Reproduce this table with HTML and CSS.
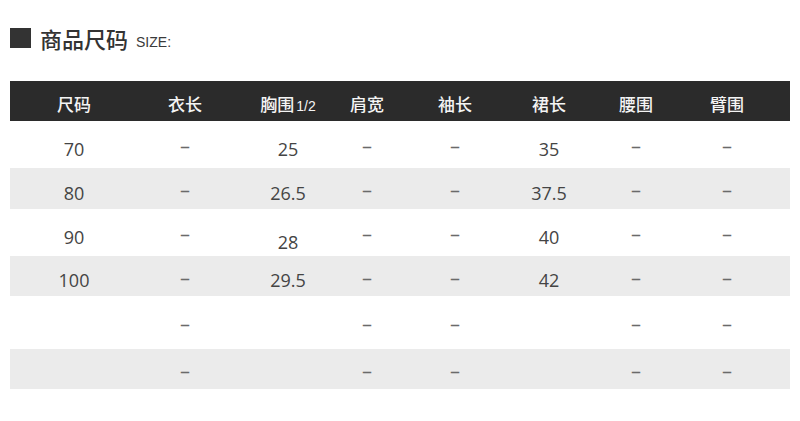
FILE: index.html
```html
<!DOCTYPE html>
<html lang="zh">
<head>
<meta charset="utf-8">
<title>商品尺码</title>
<link rel="stylesheet" href="styles.css">
</head>
<body>
<div class="page">
  <div class="title">
    <span class="sq"></span>
    <span class="cn">商品尺码</span>
    <span class="en">SIZE:</span>
  </div>
  <div class="table">
    <div class="row head">
      <div class="cell">尺码</div>
      <div class="cell">衣长</div>
      <div class="cell">胸围<small>1/2</small></div>
      <div class="cell">肩宽</div>
      <div class="cell">袖长</div>
      <div class="cell">裙长</div>
      <div class="cell">腰围</div>
      <div class="cell">臂围</div>
      <div class="cell"></div>
    </div>
    <div class="row r1">
      <div class="cell">70</div><div class="cell dash">–</div><div class="cell">25</div><div class="cell dash">–</div><div class="cell dash">–</div><div class="cell">35</div><div class="cell dash">–</div><div class="cell dash">–</div><div class="cell"></div>
    </div>
    <div class="row r2 grey">
      <div class="cell">80</div><div class="cell dash">–</div><div class="cell">26.5</div><div class="cell dash">–</div><div class="cell dash">–</div><div class="cell">37.5</div><div class="cell dash">–</div><div class="cell dash">–</div><div class="cell"></div>
    </div>
    <div class="row r3">
      <div class="cell">90</div><div class="cell dash">–</div><div class="cell low">28</div><div class="cell dash">–</div><div class="cell dash">–</div><div class="cell">40</div><div class="cell dash">–</div><div class="cell dash">–</div><div class="cell"></div>
    </div>
    <div class="row r4 grey">
      <div class="cell">100</div><div class="cell dash">–</div><div class="cell">29.5</div><div class="cell dash">–</div><div class="cell dash">–</div><div class="cell">42</div><div class="cell dash">–</div><div class="cell dash">–</div><div class="cell"></div>
    </div>
    <div class="row r5">
      <div class="cell"></div><div class="cell dash">–</div><div class="cell"></div><div class="cell dash">–</div><div class="cell dash">–</div><div class="cell"></div><div class="cell dash">–</div><div class="cell dash">–</div><div class="cell"></div>
    </div>
    <div class="row r6 grey">
      <div class="cell"></div><div class="cell dash">–</div><div class="cell"></div><div class="cell dash">–</div><div class="cell dash">–</div><div class="cell"></div><div class="cell dash">–</div><div class="cell dash">–</div><div class="cell"></div>
    </div>
  </div>
</div>
</body>
</html>
```
FILE: styles.css
```css
html, body {
  margin: 0;
  padding: 0;
  background: #ffffff;
}
.page {
  padding: 0 10px;
  font-family: "Open Sans", "Noto Sans CJK SC", sans-serif;
}
.title {
  display: flex;
  align-items: center;
  height: 20px;
  margin-top: 28px;
}
.sq {
  width: 21px;
  height: 20px;
  background: #333333;
}
.cn {
  margin-left: 9px;
  font-family: "Noto Sans CJK SC", sans-serif;
  font-size: 22px;
  font-weight: 500;
  line-height: 20px;
  color: #333333;
}
.en {
  margin-left: 8px;
  align-self: flex-end;
  font-family: "Liberation Sans", Arial, sans-serif;
  font-size: 14px;
  line-height: 12px;
  color: #3a3a3a;
}
.table {
  margin-top: 33px;
}
.row {
  display: grid;
  grid-template-columns: 128px 94px 112px 46px 130px 58px 116px 66px 1fr;
  align-items: center;
}
.cell {
  text-align: center;
  white-space: nowrap;
  font-size: 18px;
  color: #444444;
  padding-top: 8px;
}
.head {
  height: 40px;
  background: #2b2b2b;
}
.head .cell {
  font-family: "Noto Sans CJK SC", sans-serif;
  font-size: 17px;
  font-weight: 500;
  color: #f4f4f4;
  padding-top: 4px;
}
.head small {
  font-family: "Liberation Sans", Arial, sans-serif;
  font-size: 14px;
  font-weight: 400;
  margin-left: 2px;
}
.grey {
  background: #ebebeb;
}
.r1 { height: 47px; }
.r2 { height: 41px; }
.r3 { height: 47px; }
.r4 { height: 40px; }
.r5 { height: 53px; }
.r6 { height: 40px; }
.dash {
  color: #6a6a6a;
  font-size: 20px;
  padding-top: 2px;
}
.low {
  padding-top: 18px;
}
```
